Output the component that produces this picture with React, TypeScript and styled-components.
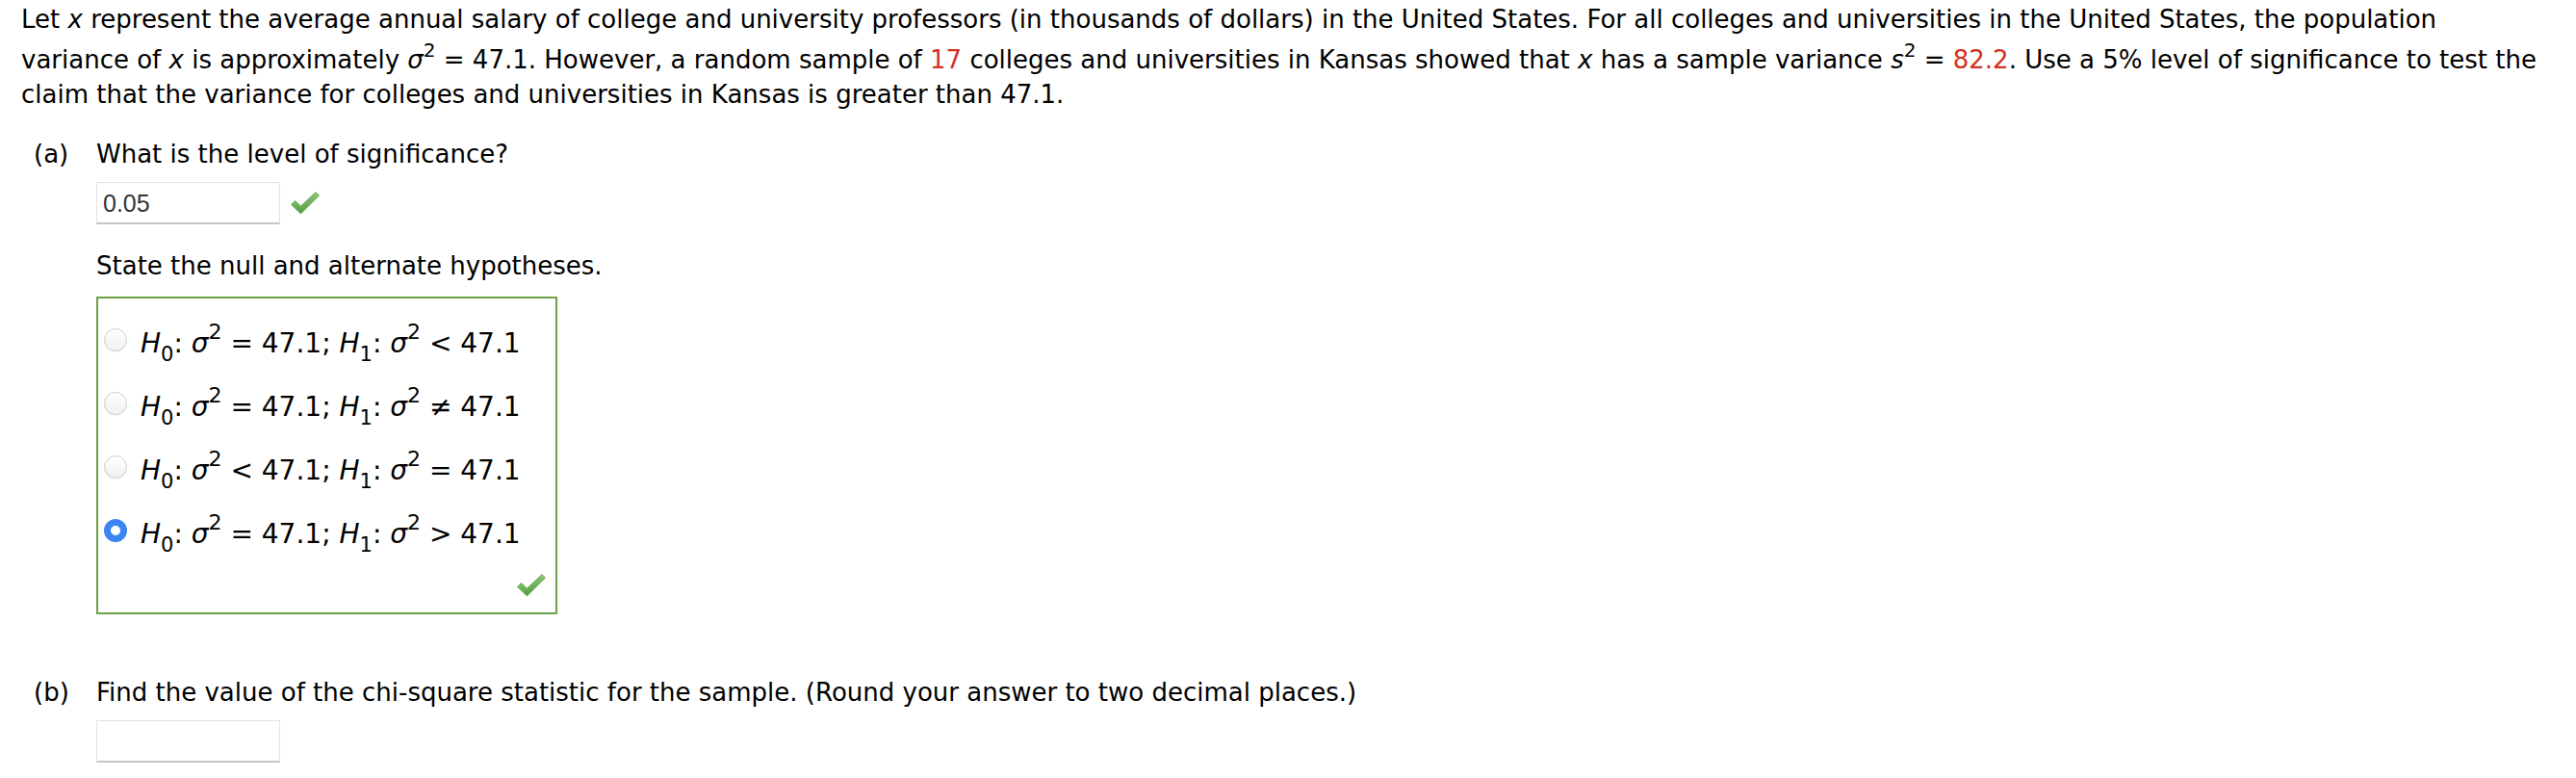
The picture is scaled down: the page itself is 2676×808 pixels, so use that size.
import React from 'react';
import styled, { createGlobalStyle } from 'styled-components';

const GlobalStyle = createGlobalStyle`
  body {
    margin: 0;
    background: #ffffff;
    font-family: 'DejaVu Sans', Verdana, sans-serif;
    color: #000;
  }
`;

const options = [
  { h0: '=', h1: '<', checked: false },
  { h0: '=', h1: '\u2260', checked: false },
  { h0: '<', h1: '=', checked: false },
  { h0: '=', h1: '>', checked: true },
];

function CheckMark() {
  return (
    <CheckSvg width='32' height='26' viewBox='0 0 32 26'>
      <defs>
        <linearGradient id='chk' x1='0' y1='0' x2='0.3' y2='1'>
          <stop offset='0' stopColor='#a6d98f' />
          <stop offset='1' stopColor='#4f9b3d' />
        </linearGradient>
      </defs>
      <path
        d='M1.5 14.5 L5.5 10.5 L11.5 16 L27 1.5 L30.5 5 L11.5 24 Z'
        fill='url(#chk)'
        stroke='#5f9f4c'
        strokeWidth='0.8'
        strokeLinejoin='round'
      />
    </CheckSvg>
  );
}

function Hypothesis({ h0, h1 }: { h0: string; h1: string }) {
  return (
    <MathText>
      <i>H</i>
      <Sub>0</Sub>: <i>σ</i>
      <Sup>2</Sup> {h0} 47.1; <i>H</i>
      <Sub>1</Sub>: <i>σ</i>
      <Sup>2</Sup> {h1} 47.1
    </MathText>
  );
}

function App() {
  return (
    <Page>
      <GlobalStyle />
      <Intro>
        Let <i>x</i> represent the average annual salary of college and
        university professors (in thousands of dollars) in the United States.
        For all colleges and universities in the United States, the population
        <br />
        variance of <i>x</i> is approximately <i>σ</i>
        <BodySup>2</BodySup> = 47.1. However, a random sample of{' '}
        <Red>17</Red> colleges and universities in Kansas showed that <i>x</i>{' '}
        has a sample variance <i>s</i>
        <BodySup>2</BodySup> = <Red>82.2</Red>. Use a 5% level of significance
        to test the
        <br />
        claim that the variance for colleges and universities in Kansas is
        greater than 47.1.
      </Intro>

      <Part $top={26}>
        <Label>(a)</Label>
        <PartBody>
          <Question>What is the level of significance?</Question>
          <AnswerRow>
            <AnswerInput readOnly value='0.05' />
            <CheckMark />
          </AnswerRow>
          <Question>State the null and alternate hypotheses.</Question>
          <ChoiceBox>
            {options.map((o, i) => (
              <ChoiceRow key={i}>
                <Radio $checked={o.checked} />
                <Hypothesis h0={o.h0} h1={o.h1} />
              </ChoiceRow>
            ))}
            <BoxFooter>
              <CheckMark />
            </BoxFooter>
          </ChoiceBox>
        </PartBody>
      </Part>

      <Part $top={63}>
        <Label>(b)</Label>
        <PartBody>
          <Question>
            Find the value of the chi-square statistic for the sample. (Round
            your answer to two decimal places.)
          </Question>
          <AnswerRow>
            <AnswerInput readOnly value='' />
          </AnswerRow>
        </PartBody>
      </Part>
    </Page>
  );
}

export default App;

const Page = styled.div`
  padding: 0 0 0 22px;
`;

const Intro = styled.p`
  margin: 0;
  padding-top: 2px;
  font-size: 26px;
  line-height: 36px;
  white-space: nowrap;
`;

const Red = styled.span`
  color: #d2311f;
`;

const BodySup = styled.span`
  font-size: 20px;
  vertical-align: 12px;
  line-height: 28px;
`;

const Part = styled.div<{ $top: number }>`
  display: flex;
  padding-left: 13px;
  margin-top: ${(p) => p.$top}px;
`;

const Label = styled.div`
  width: 65px;
  flex-shrink: 0;
  font-size: 26px;
  line-height: 36px;
`;

const PartBody = styled.div`
  display: flex;
  flex-direction: column;
  align-items: flex-start;
`;

const Question = styled.div`
  font-size: 26px;
  line-height: 36px;
`;

const AnswerRow = styled.div`
  display: flex;
  align-items: center;
  gap: 10px;
  margin: 11px 0 25px;
`;

const AnswerInput = styled.input`
  box-sizing: border-box;
  width: 191px;
  height: 44px;
  padding: 2px 6px 0;
  border: 1px solid #e3e3e3;
  border-bottom: 2px solid #c4c4c4;
  border-radius: 0;
  font-family: 'Liberation Sans', Arial, sans-serif;
  font-size: 25px;
  color: #333;
  outline: none;
`;

const CheckSvg = styled.svg`
  display: block;
`;

const ChoiceBox = styled.div`
  box-sizing: border-box;
  width: 479px;
  height: 330px;
  margin-top: 14px;
  border: 2px solid #6da145;
  padding: 10px 9px 0 6px;
  display: flex;
  flex-direction: column;
`;

const ChoiceRow = styled.div`
  display: flex;
  align-items: center;
  height: 66px;
  gap: 14px;
`;

const Radio = styled.span<{ $checked: boolean }>`
  box-sizing: border-box;
  width: 24px;
  height: 24px;
  border-radius: 50%;
  flex-shrink: 0;
  border: ${(p) => (p.$checked ? '7px solid #3d86f2' : '1px solid #cfcfcf')};
  background: ${(p) =>
    p.$checked ? '#ffffff' : 'linear-gradient(#ffffff, #f0f0f0)'};
  box-shadow: ${(p) => (p.$checked ? 'none' : '0 1px 1px rgba(0,0,0,0.06)')};
`;

const MathText = styled.span`
  font-size: 28px;
  line-height: 40px;
  white-space: nowrap;
  padding-top: 8px;
`;

const Sub = styled.span`
  font-size: 21px;
  vertical-align: -9px;
  line-height: 0;
`;

const Sup = styled.span`
  font-size: 22px;
  vertical-align: 14px;
  line-height: 0;
`;

const BoxFooter = styled.div`
  display: flex;
  justify-content: flex-end;
  margin-top: 11px;
`;
